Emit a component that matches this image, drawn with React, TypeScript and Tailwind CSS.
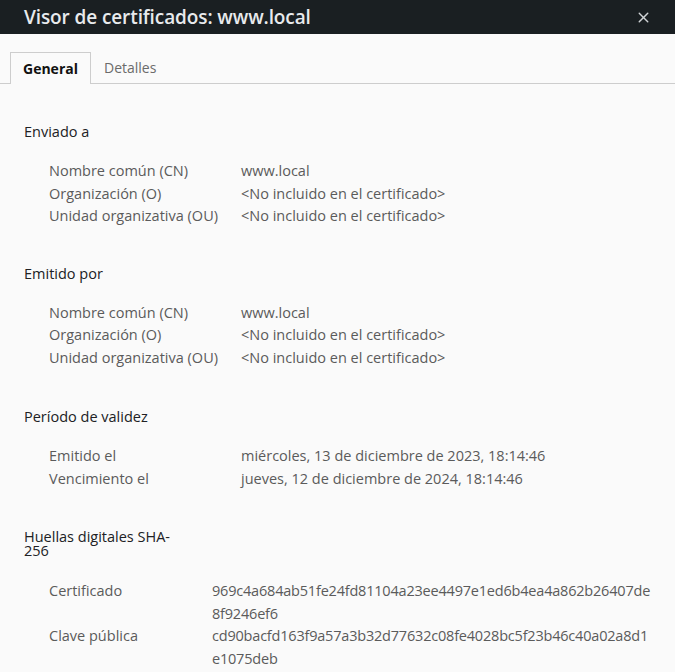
import { X } from 'lucide-react'

interface Row {
  label: string
  value: string
}

interface Section {
  title: string
  rows: Row[]
  gap: string
}

const sections: Section[] = [
  {
    title: 'Enviado a',
    gap: 'mb-[35px]',
    rows: [
      { label: 'Nombre común (CN)', value: 'www.local' },
      { label: 'Organización (O)', value: '<No incluido en el certificado>' },
      { label: 'Unidad organizativa (OU)', value: '<No incluido en el certificado>' },
    ],
  },
  {
    title: 'Emitido por',
    gap: 'mb-[37px]',
    rows: [
      { label: 'Nombre común (CN)', value: 'www.local' },
      { label: 'Organización (O)', value: '<No incluido en el certificado>' },
      { label: 'Unidad organizativa (OU)', value: '<No incluido en el certificado>' },
    ],
  },
  {
    title: 'Período de validez',
    gap: 'mb-[40px]',
    rows: [
      { label: 'Emitido el', value: 'miércoles, 13 de diciembre de 2023, 18:14:46' },
      { label: 'Vencimiento el', value: 'jueves, 12 de diciembre de 2024, 18:14:46' },
    ],
  },
]

// hashes are shown split in two lines, the way the dialog wraps them
const fingerprints: { label: string; lines: string[] }[] = [
  { label: 'Certificado', lines: ['969c4a684ab51fe24fd81104a23ee4497e1ed6b4ea4a862b26407de', '8f9246ef6'] },
  { label: 'Clave pública', lines: ['cd90bacfd163f9a57a3b32d77632c08fe4028bc5f23b46c40a02a8d1', 'e1075deb'] },
]

function InfoSection({ section }: { section: Section }): React.ReactElement {
  return (
    <div className={section.gap}>
      <div className="h-[22px] leading-[22px] text-[#202124]">{section.title}</div>
      <div className="mt-[17px] pl-[25px]">
        {section.rows.map((row) => (
          <div key={row.label} className="flex leading-[22.5px] text-[#5b5b5b]">
            <span className="w-[192px] shrink-0">{row.label}</span>
            <span>{row.value}</span>
          </div>
        ))}
      </div>
    </div>
  )
}

export default function App(): React.ReactElement {
  return (
    <div className="w-[675px] h-[672px] overflow-hidden bg-[#fafafa] font-['Open_Sans',sans-serif] text-[14.5px]">
      <div className="h-[34px] bg-[#1a1f22] flex items-center justify-between pl-[24px] pr-[23px]">
        <span className="text-[19px] font-semibold text-[#e8eaed] tracking-[-0.1px]">Visor de certificados: www.local</span>
        <X className="w-[17px] h-[17px] text-[#d0d3d6]" strokeWidth={2} />
      </div>

      <div className="mt-[18px] h-[32px] border-b border-[#cdcdcd] flex items-end pl-[10px]">
        <div className="h-[32px] -mb-px px-[12px] border border-b-0 border-[#cdcdcd] bg-[#fafafa] flex items-center font-bold text-[14px] text-[#111]">
          General
        </div>
        <div className="h-[31px] px-[13px] flex items-center text-[14px] text-[#6b6b6b]">Detalles</div>
      </div>

      <div className="pl-[24px] pr-[20px] pt-[37px]">
        {sections.map((s) => (
          <InfoSection key={s.title} section={s} />
        ))}

        <div>
          <div className="w-[150px] leading-[14px] text-[#202124]">Huellas digitales SHA-256</div>
          <div className="mt-[22px] pl-[25px]">
            {fingerprints.map((row) => (
              <div key={row.label} className="flex leading-[22.5px] text-[#5b5b5b]">
                <span className="w-[163px] shrink-0">{row.label}</span>
                <span className="flex flex-col tracking-[-0.2px]">
                  {row.lines.map((l) => (
                    <span key={l}>{l}</span>
                  ))}
                </span>
              </div>
            ))}
          </div>
        </div>
      </div>
    </div>
  )
}
